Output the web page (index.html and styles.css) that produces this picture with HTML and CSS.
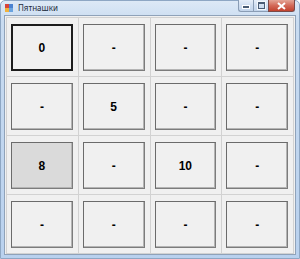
FILE: index.html
```html
<!DOCTYPE html>
<html lang="ru">
<head>
    <meta charset="UTF-8">
    <title>Пятнашки</title>
    <link rel="stylesheet" href="styles.css">
</head>
<body>
    <div class="window">
        <div class="titlebar">
            <div class="app-icon">
                <span class="sq red"></span><span class="sq blue"></span>
                <span class="sq green"></span><span class="sq yellow"></span>
            </div>
            <div class="title">Пятнашки</div>
            <div class="caption-btns">
                <div class="cap-btn min"><span class="min-bar"></span></div>
                <div class="cap-btn max"><span class="max-box"></span></div>
                <div class="cap-btn close">
                    <svg width="9" height="8" viewBox="0 0 9 8">
                        <path d="M1 1 L8 7 M8 1 L1 7" stroke="#fff" stroke-width="2" fill="none"/>
                    </svg>
                </div>
            </div>
        </div>

        <div class="client">
            <div class="board">
                <div class="cell"><button class="tile focused">0</button></div>
                <div class="cell"><button class="tile">-</button></div>
                <div class="cell"><button class="tile">-</button></div>
                <div class="cell"><button class="tile">-</button></div>

                <div class="cell"><button class="tile">-</button></div>
                <div class="cell"><button class="tile">5</button></div>
                <div class="cell"><button class="tile">-</button></div>
                <div class="cell"><button class="tile">-</button></div>

                <div class="cell"><button class="tile pressed">8</button></div>
                <div class="cell"><button class="tile">-</button></div>
                <div class="cell"><button class="tile">10</button></div>
                <div class="cell"><button class="tile">-</button></div>

                <div class="cell"><button class="tile">-</button></div>
                <div class="cell"><button class="tile">-</button></div>
                <div class="cell"><button class="tile">-</button></div>
                <div class="cell"><button class="tile">-</button></div>
            </div>
        </div>
    </div>
</body>
</html>
```

FILE: styles.css
```css
* {
    margin: 0;
    padding: 0;
    box-sizing: border-box;
}

body {
    width: 300px;
    height: 259px;
    overflow: hidden;
    font-family: 'Liberation Sans', Arial, sans-serif;
    background: #fff;
}

.window {
    width: 300px;
    height: 259px;
    display: flex;
    flex-direction: column;
    border: 1px solid #8ea7c4;
    border-radius: 5px 5px 0 0;
    background: linear-gradient(180deg, #dde9f6 0%, #c9dcf1 8%, #b9d1ee 100%);
}

.titlebar {
    height: 14px;
    display: flex;
    align-items: center;
    padding-left: 4px;
    position: relative;
}

.app-icon {
    width: 8px;
    height: 8px;
    display: grid;
    grid-template-columns: 1fr 1fr;
    gap: 0;
    margin-right: 5px;
}

.sq {
    display: block;
}

.red { background: #d8443a; }
.blue { background: #4a82d0; }
.green { background: #f0b23c; }
.yellow { background: #6aa4e0; }

.title {
    font-family: 'Noto Sans', sans-serif;
    font-size: 8px;
    color: #1e2b3b;
    line-height: 1;
}

.caption-btns {
    position: absolute;
    top: -1px;
    right: 4px;
    display: flex;
}

.cap-btn {
    height: 12px;
    display: flex;
    align-items: center;
    justify-content: center;
    border: 1px solid #8a9db5;
    border-top: none;
}

.min, .max {
    width: 15px;
    background: linear-gradient(180deg, #e6eef8 0%, #d0def0 50%, #c2d4ea 100%);
    border-right: none;
}

.min {
    border-radius: 0 0 0 3px;
}

.min-bar {
    width: 6px;
    height: 2px;
    margin-top: 3px;
    background: #4a5c74;
    border: 1px solid #fff;
    box-sizing: content-box;
}

.max-box {
    width: 5px;
    height: 4px;
    border: 1px solid #4a5c74;
    border-top-width: 2px;
    box-sizing: content-box;
    outline: 1px solid #f4f8fc;
}

.close {
    width: 27px;
    background: linear-gradient(180deg, #e4a596 0%, #d36a58 50%, #c2422e 100%);
    border-color: #7a4a48;
    border-radius: 0 0 3px 0;
}

.client {
    flex: 1;
    margin: 0 3px 3px 3px;
    background: #f0f0f0;
    border: 1px solid #8fa2b9;
    padding: 1px 1px 0 1px;
    display: flex;
}

.board {
    flex: 1;
    display: grid;
    grid-template-columns: repeat(4, 1fr);
    grid-template-rows: repeat(4, 1fr);
    gap: 1px;
    padding: 1px;
    background: #d2d2d2;
}

.cell {
    background: #f0f0f0;
    padding: 6px 5px 5px 4px;
    display: flex;
}

.tile {
    flex: 1;
    font-family: 'Liberation Sans', Arial, sans-serif;
    font-weight: bold;
    font-size: 12px;
    color: #000;
    background: #f0f0f0;
    border: 1px solid #6b6b6b;
    border-right-color: #7c7c7c;
    border-bottom-color: #7c7c7c;
    box-shadow: inset -1px -1px 0 #b4b4b4;
    cursor: pointer;
}

.tile.focused {
    border: 2px solid #1c1c1c;
    box-shadow: none;
}

.tile.pressed {
    background: #dadada;
}
```
